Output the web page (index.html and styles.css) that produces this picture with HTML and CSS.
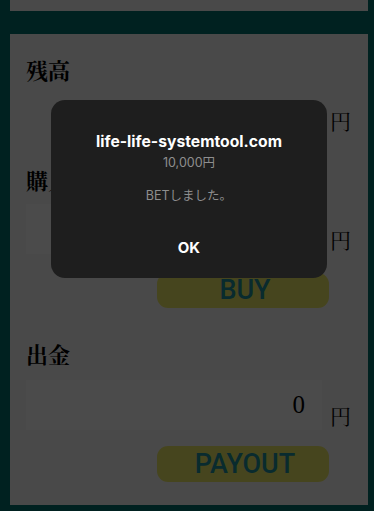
FILE: index.html
```html
<html lang="ja">

<head>
    <meta charset="UTF-8">
    <meta name="viewport" content="width=device-width, initial-scale=1.0">
    <title>残高</title>
    <link rel="stylesheet" href="styles.css">
</head>

<body>
    <div class="page">
        <div class="card card-prev"></div>

        <div class="card">
            <h2 class="label">残高</h2>
            <div class="row">
                <div class="value">10,000</div>
                <span class="unit">円</span>
            </div>

            <h2 class="label label-buy">購入</h2>
            <div class="row">
                <input type="text" class="field" value="">
                <span class="unit">円</span>
            </div>
            <div class="actions">
                <button class="btn btn-buy">BUY</button>
            </div>

            <h2 class="label label-out">出金</h2>
            <div class="row">
                <input type="text" class="field" value="0">
                <span class="unit">円</span>
            </div>
            <div class="actions">
                <button class="btn btn-out">PAYOUT</button>
            </div>
        </div>
    </div>

    <!-- ブラウザのalert -->
    <div class="overlay"></div>
    <div class="alert">
        <div class="alert-title">life-life-systemtool.com</div>
        <div class="alert-text">10,000円</div>
        <div class="alert-text alert-msg">BETしました。</div>
        <div class="alert-ok">OK</div>
    </div>
</body>

</html>
```

FILE: styles.css
```css
body {
    margin: 0;
    background: #006e6b;
    font-family: 'Liberation Serif', 'Noto Serif CJK JP', 'Noto Sans CJK JP', serif;
    color: #000;
}

.page {
    padding: 0 6px 0 10px;
}

.card {
    background-color: #f5f5f5;
    padding: 25px 16px 0;
    height: 471px;
    box-sizing: border-box;
}

.card-prev {
    height: 11px;
    padding: 0;
    margin-bottom: 23px;
}

.label {
    margin: 0;
    font-size: 22px;
    line-height: 26px;
    font-weight: 700;
}

.label-buy {
    margin-top: 34px;
}

.label-out {
    margin-top: 35px;
}

.row {
    display: flex;
    align-items: flex-end;
    gap: 8px;
}

.label-buy + .row {
    margin-top: 9px;
}

.label-out + .row {
    margin-top: 11px;
}

.value,
.field {
    flex: 1;
    height: 50px;
    box-sizing: border-box;
    padding: 0 17px;
    text-align: right;
    font-family: 'Liberation Serif', serif;
    font-size: 25px;
}

.value {
    color: transparent;
}

.field {
    border: none;
    background-color: #fcfcfc;
    color: #000;
    min-width: 0;
}

.unit {
    font-size: 21px;
    line-height: 24px;
    width: 22px;
    margin-bottom: 1px;
}

.actions {
    display: flex;
    justify-content: flex-end;
    padding-right: 23px;
    margin-top: 19px;
}

.label-out + .row + .actions {
    margin-top: 16px;
}

.btn {
    width: 172px;
    height: 35px;
    border: none;
    border-radius: 11px;
    background-color: #ebe667;
    color: #1e8f9c;
    font-family: Roboto, sans-serif;
    font-weight: 500;
    font-size: 27px;
    line-height: 35px;
    padding: 0 0 0 4px;
}

.btn-out {
    height: 36px;
}

.overlay {
    position: fixed;
    inset: 0;
    background: rgba(0, 0, 0, 0.7);
}

.alert {
    position: fixed;
    top: 100px;
    left: 51px;
    width: 276px;
    height: 178px;
    box-sizing: border-box;
    padding-top: 32px;
    border-radius: 14px;
    background-color: #1e1e1e;
    text-align: center;
    font-family: Inter, 'Noto Sans CJK JP', sans-serif;
}

.alert-title {
    color: #fff;
    font-size: 15.7px;
    font-weight: 700;
    line-height: 20px;
}

.alert-text {
    color: #8e8e8e;
    font-size: 12.5px;
    line-height: 18px;
    margin-top: 2px;
}

.alert-msg {
    margin-top: 15px;
}

.alert-ok {
    color: #fff;
    font-size: 15px;
    font-weight: 700;
    line-height: 20px;
    margin-top: 33px;
}
```
